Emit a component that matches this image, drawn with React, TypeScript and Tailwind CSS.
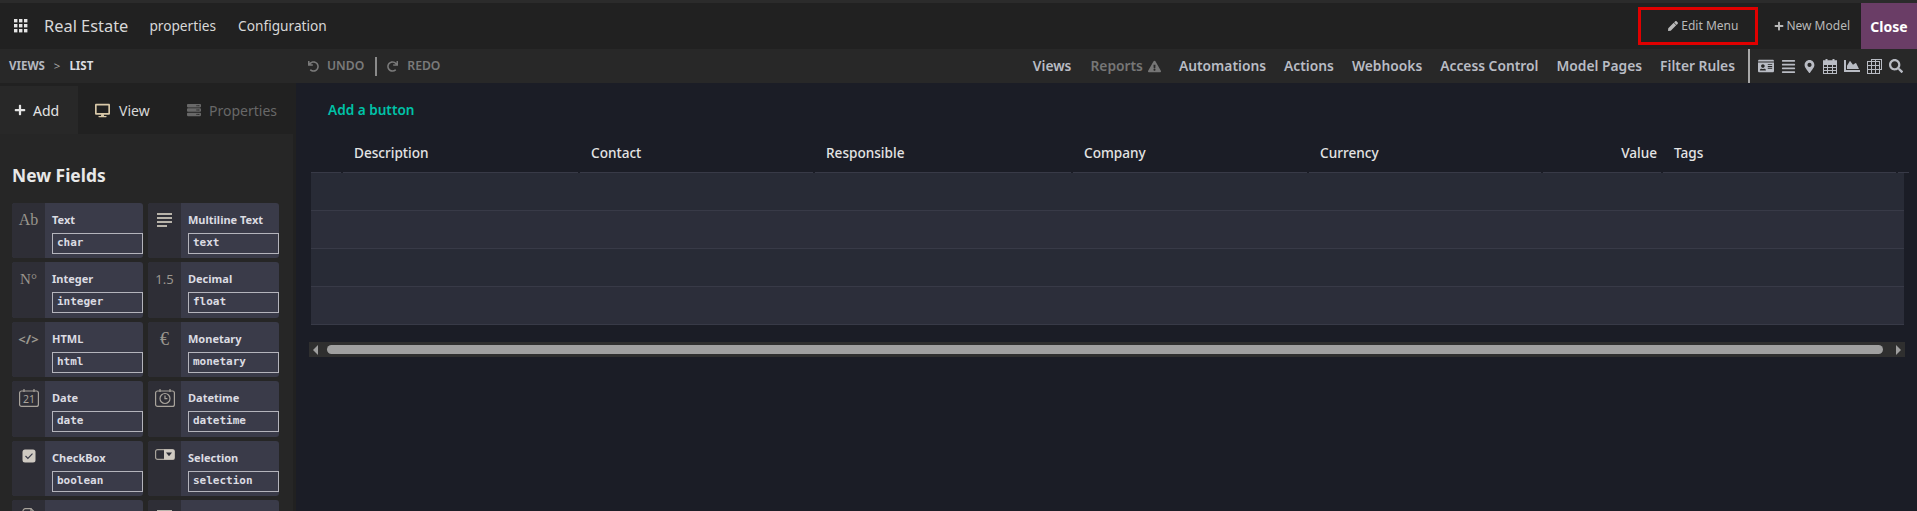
import type { ReactNode } from "react";
import {
  FaAlignJustify,
  FaChartArea,
  FaDesktop,
  FaExclamationTriangle,
  FaIdCard,
  FaMapMarkerAlt,
  FaPen,
  FaPlus,
  FaRedo,
  FaSearch,
  FaServer,
  FaUndo,
} from "react-icons/fa";

type FieldCardProps = Readonly<{
  icon: ReactNode;
  label: string;
  tech: string;
}>;

const sans = "font-['Noto_Sans','Liberation_Sans',sans-serif]";

const navLinks = ["Automations", "Actions", "Webhooks", "Access Control", "Model Pages", "Filter Rules"];

const columns = [
  { label: "", width: "w-[32px]" },
  { label: "Description", width: "w-[237px]" },
  { label: "Contact", width: "w-[235px]" },
  { label: "Responsible", width: "w-[258px]" },
  { label: "Company", width: "w-[236px]" },
  { label: "Currency", width: "w-[234px]" },
  { label: "Value", width: "w-[120px]", right: true },
  { label: "Tags", width: "w-[235px]" },
  { label: "", width: "w-[6px]" },
];

function AppsIcon() {
  return (
    <svg width="14" height="14" viewBox="0 0 14 14" fill="#e4e4e4">
      {[0, 5, 10].map((y) =>
        [0, 5, 10].map((x) => <rect key={`${x}-${y}`} x={x} y={y} width="3.4" height="3.4" />),
      )}
    </svg>
  );
}

function CalendarGridIcon() {
  return (
    <svg width="14" height="15" viewBox="0 0 14 15" fill="none" stroke="#b9bcc4" strokeWidth="1">
      <rect x="0.5" y="2" width="13" height="12.5" />
      <path d="M0.5 5.5h13M0.5 8.5h13M0.5 11.5h13M4.5 5.5v9M9.5 5.5v9" />
      <path d="M3.5 0v3.5M10.5 0v3.5" strokeWidth="2" />
      <rect x="0.5" y="2" width="13" height="3" fill="#b9bcc4" />
    </svg>
  );
}

function TableGridIcon() {
  return (
    <svg width="15" height="15" viewBox="0 0 15 15" fill="none" stroke="#b9bcc4" strokeWidth="1">
      <rect x="0.5" y="2.5" width="12" height="12" />
      <rect x="4.5" y="0.5" width="10" height="10" />
      <path d="M0.5 6.5h12M0.5 10.5h12M4.5 2.5v12M8.5 0.5v14" />
    </svg>
  );
}

function DateIcon() {
  return (
    <svg width="20" height="18" viewBox="0 0 20 18" fill="none" stroke="#a8a39b" strokeWidth="1.2">
      <rect x="0.6" y="2" width="18.8" height="15.4" rx="2" />
      <path d="M5 0v3M15 0v3" />
      <text x="10" y="14" textAnchor="middle" fontSize="10.5" stroke="none" fill="#a8a39b" fontFamily="Noto Sans">
        21
      </text>
    </svg>
  );
}

function DatetimeIcon() {
  return (
    <svg width="20" height="18" viewBox="0 0 20 18" fill="none" stroke="#a8a39b" strokeWidth="1.2">
      <rect x="0.6" y="2" width="18.8" height="15.4" rx="2" />
      <path d="M5 0v3M15 0v3" />
      <circle cx="10" cy="9.5" r="5" />
      <path d="M10 6.5v3.2h2.4" />
    </svg>
  );
}

function CheckIcon() {
  return (
    <svg width="14" height="14" viewBox="0 0 14 14">
      <rect width="13" height="13" x="0.5" y="0.5" rx="2.5" fill="#cfcac2" />
      <path d="M3.5 7l2.4 2.4 4.6-4.8" fill="none" stroke="#3a3b49" strokeWidth="1.2" />
    </svg>
  );
}

function SelectionIcon() {
  return (
    <svg width="20" height="12" viewBox="0 0 20 12">
      <rect x="0.6" y="0.6" width="18.8" height="9.8" rx="2" fill="none" stroke="#a8a39b" strokeWidth="1.2" />
      <path d="M9 0.6h8.4a2 2 0 0 1 2 2v6a2 2 0 0 1-2 2H9z" fill="#cfcac2" />
      <path d="M11 3.6h6l-3 3.6z" fill="#2c2d36" />
    </svg>
  );
}

function FileIcon() {
  return (
    <svg width="14" height="16" viewBox="0 0 14 16" fill="none" stroke="#a8a39b" strokeWidth="1.2">
      <path d="M1 3a2.4 2.4 0 0 1 2.4-2.4H9l4 4V15H1z" />
      <path d="M9 .6v4h4" />
    </svg>
  );
}

function TextIcon() {
  return (
    <div className="mt-[2px] flex w-[15px] flex-col gap-[2px]">
      <div className="h-[2px] w-[15px] bg-[#b8b3aa]" />
      <div className="h-[2px] w-[15px] bg-[#b8b3aa]" />
      <div className="h-[2px] w-[15px] bg-[#b8b3aa]" />
      <div className="h-[2px] w-[10px] bg-[#b8b3aa]" />
    </div>
  );
}

function FieldCard({ icon, label, tech }: FieldCardProps) {
  return (
    <div className="flex h-[55.4px] w-[131px] shrink-0 overflow-hidden rounded-[3px] bg-[#3a3b49]">
      <div className="flex h-full w-[33px] shrink-0 justify-center bg-[#2e2e36] pt-[8px] text-[#9a968e]">{icon}</div>
      <div className="min-w-0 flex-1 pl-[7px]">
        <div className="mt-[9px] text-[11px] font-bold leading-[16px] text-[#dcdce2]">{label}</div>
        <div className="mt-[5px] h-[21px] border border-[#b4b4bc] pl-[4px] font-['DejaVu_Sans_Mono',monospace] text-[11px] font-bold leading-[18px] text-[#dcdce2]">
          {tech}
        </div>
      </div>
    </div>
  );
}

export default function App() {
  return (
    <div className={`flex h-[511px] w-[1917px] flex-col overflow-hidden bg-[#1b1d26] ${sans}`}>
      <div className="h-[3px] shrink-0 bg-[#2b2b2b]" />

      <header className="flex h-[46px] shrink-0 items-center bg-[#212121] text-[#d8d8d8]">
        <div className="ml-[14px] flex w-[30px] items-center">
          <AppsIcon />
        </div>
        <span className="text-[16.4px]">Real Estate</span>
        <span className="ml-[21px] text-[13.7px]">properties</span>
        <span className="ml-[22px] text-[13.7px]">Configuration</span>

        <div className="ml-auto flex h-full items-center">
          <div className="mr-[16px] flex h-[38px] w-[120px] items-center justify-end gap-[3px] border-[3px] border-[#e00000] pr-[17px] text-[12px] text-[#b9b9b9]">
            <FaPen className="text-[10px]" />
            <span>Edit Menu</span>
          </div>
          <div className="flex items-center gap-[2px] text-[12px] text-[#b9b9b9]">
            <FaPlus className="text-[10px]" />
            <span>New Model</span>
          </div>
          <div className="ml-[11px] flex h-full w-[56px] items-center justify-center bg-[#6a3d66] text-[14px] font-bold text-white">
            Close
          </div>
        </div>
      </header>

      <div className="flex h-[34px] shrink-0 items-center bg-[#282828]">
        <div className="flex w-[308px] items-center text-[11.5px] font-bold">
          <span className="ml-[9px] text-[#b5b8c0]">VIEWS</span>
          <span className="ml-[9px] font-normal text-[#a8a8a8]">&gt;</span>
          <span className="ml-[9px] text-[#dcdce2]">LIST</span>
        </div>
        <div className="flex items-center text-[12.2px] font-semibold text-[#7a7a7a]">
          <FaUndo className="text-[11px]" />
          <span className="ml-[8px]">UNDO</span>
          <span className="ml-[11px] mr-[10px] h-[19px] w-[2px] bg-[#8a8a8a]" />
          <FaRedo className="text-[11px]" />
          <span className="ml-[9px]">REDO</span>
        </div>

        <nav className="ml-auto flex items-center text-[13.8px] font-semibold text-[#b9bcc4]">
          <span>Views</span>
          <span className="ml-[19px] flex items-center gap-[5px] text-[#767676]">
            Reports
            <FaExclamationTriangle className="text-[13px]" />
          </span>
          {navLinks.map((link) => (
            <span key={link} className="ml-[18px]">
              {link}
            </span>
          ))}
        </nav>
        <div className="ml-[13px] flex h-[34px] w-[169px] items-center gap-[7px] border-l-2 border-[#a8a8a8] pl-[8px] text-[15px] text-[#b9bcc4]">
          <FaIdCard className="text-[16px]" />
          <FaAlignJustify />
          <FaMapMarkerAlt className="text-[13px]" />
          <CalendarGridIcon />
          <FaChartArea className="text-[16px]" />
          <TableGridIcon />
          <FaSearch className="text-[14px]" />
        </div>
      </div>

      <div className="flex min-h-0 flex-1">
        <aside className="flex w-[296px] shrink-0 flex-col overflow-hidden border-r-[3px] border-t-[3px] border-[#212121] bg-[#262626]">
          <div className="flex h-[48px] shrink-0 items-center bg-[#212121] text-[14px]">
            <div className="flex h-full w-[78px] items-center gap-[7px] bg-[#282828] pl-[14px] text-[#e4e4e4]">
              <FaPlus className="text-[12px]" />
              Add
            </div>
            <div className="flex h-full w-[93px] items-center gap-[9px] pl-[17px] text-[#d8d8d8]">
              <FaDesktop className="text-[15px] text-[#d8c8a8]" />
              View
            </div>
            <div className="flex h-full items-center gap-[8px] pl-[16px] text-[#686868]">
              <FaServer className="text-[14px]" />
              Properties
            </div>
          </div>

          <h2 className="ml-[12px] mt-[29px] shrink-0 text-[17.4px] font-bold leading-[24px] text-[#e8e8e8]">New Fields</h2>

          <div className="ml-[12px] mt-[16px] grid w-[267px] grid-cols-2 gap-x-[5px] gap-y-[4px]">
            <FieldCard icon={<span className="font-['Liberation_Serif',serif] text-[16px] leading-[18px]">Ab</span>} label="Text" tech="char" />
            <FieldCard icon={<TextIcon />} label="Multiline Text" tech="text" />
            <FieldCard icon={<span className="font-['Liberation_Serif',serif] text-[15px] leading-[18px]">N°</span>} label="Integer" tech="integer" />
            <FieldCard icon={<span className="text-[13px] leading-[18px]">1.5</span>} label="Decimal" tech="float" />
            <FieldCard icon={<span className="text-[13px] font-bold leading-[18px]">&lt;/&gt;</span>} label="HTML" tech="html" />
            <FieldCard icon={<span className="font-['Liberation_Serif',serif] text-[18px] leading-[18px]">€</span>} label="Monetary" tech="monetary" />
            <FieldCard icon={<DateIcon />} label="Date" tech="date" />
            <FieldCard icon={<DatetimeIcon />} label="Datetime" tech="datetime" />
            <FieldCard icon={<CheckIcon />} label="CheckBox" tech="boolean" />
            <FieldCard icon={<SelectionIcon />} label="Selection" tech="selection" />
            <FieldCard icon={<FileIcon />} label="File" tech="binary" />
            <FieldCard icon={<TextIcon />} label="Lines" tech="one2many" />
          </div>
        </aside>

        <main className="min-w-0 flex-1 pl-[15px]">
          <div className="mt-[8px] h-[38px] pl-[17px] text-[13.6px] font-semibold leading-[38px] text-[#00c2a8]">
            Add a button
          </div>

          <div className="mt-[6px] flex h-[38px] w-[1593px] text-[13.6px] font-medium text-[#e4e4e4]">
            {columns.map((col, i) => (
              <div key={i} className={`${col.width} shrink-0`}>
                <div
                  className={`mr-[2px] flex h-full items-center border-b border-[#383a47] ${
                    col.right ? "justify-end pr-[4px]" : "pl-[11px]"
                  }`}
                >
                  {col.label}
                </div>
              </div>
            ))}
          </div>

          <div className="w-[1593px]">
            <div className="h-[38px] border-b border-[#383a47] bg-[#282b36]" />
            <div className="h-[38px] border-b border-[#383a47] bg-[#2c2e3a]" />
            <div className="h-[38px] border-b border-[#383a47] bg-[#282b36]" />
            <div className="h-[38px] border-b border-[#383a47] bg-[#2c2e3a]" />
          </div>

          <div className="-ml-[2px] mt-[17px] flex h-[15px] w-[1596px] items-center bg-[#2f2f2f] px-[4px]">
            <div className="h-0 w-0 border-y-[5px] border-r-[5px] border-y-transparent border-r-[#9e9e9e]" />
            <div className="ml-[9px] h-[9px] flex-1 rounded-full bg-[#a0a0a0]" />
            <div className="ml-[13px] h-0 w-0 border-y-[5px] border-l-[5px] border-y-transparent border-l-[#9e9e9e]" />
          </div>
        </main>
      </div>
    </div>
  );
}
